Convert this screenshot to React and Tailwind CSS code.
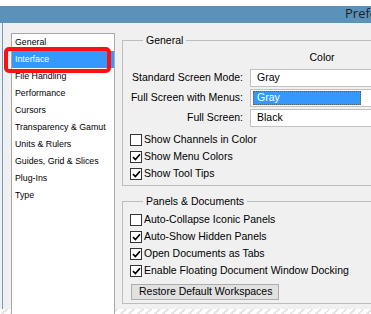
import React from "react";

const Chevron = () => (
  <svg width="7" height="5" viewBox="0 0 7 5" className="shrink-0">
    <path d="M0.5 0.8 L3.5 3.8 L6.5 0.8" stroke="#333" strokeWidth="1.2" fill="none" />
  </svg>
);

const Check = ({ checked, label }) => (
  <div className="flex items-center h-[17px]">
    <span className="w-[12px] h-[12px] border border-[#333333] bg-white flex items-center justify-center shrink-0">
      {checked && (
        <svg width="9" height="8" viewBox="0 0 9 8">
          <path d="M1 4.2 L3.4 6.6 L8 1.2" stroke="#000" strokeWidth="1.7" fill="none" />
        </svg>
      )}
    </span>
    <span className="ml-[2px] whitespace-nowrap">{label}</span>
  </div>
);

const Select = ({ value, focused }) => (
  <div className="h-[18px] w-[144px] border border-[#c2c2c2] bg-white flex items-center pr-[4px]">
    {focused ? (
      <div className="ml-[2px] h-[14px] w-[108px] bg-[#3399ff] border border-dotted border-[#7a5a30] text-white flex items-center pl-[3px]">
        {value}
      </div>
    ) : (
      <div className="pl-[6px] w-[111px]">{value}</div>
    )}
    <div className="flex-1" />
    <Chevron />
  </div>
);

const items = [
  "General",
  "Interface",
  "File Handling",
  "Performance",
  "Cursors",
  "Transparency & Gamut",
  "Units & Rulers",
  "Guides, Grid & Slices",
  "Plug-Ins",
  "Type",
];

export default function App() {
  return (
    <div
      className="w-[371px] h-[314px] overflow-hidden bg-white flex flex-col text-[10.5px] text-black"
      style={{ fontFamily: '"Liberation Sans", Arial, sans-serif' }}
    >
      <div className="h-[6px] shrink-0 bg-white" />
      <div
        className="h-[17px] shrink-0 bg-[#5b92bc] pl-[345px] whitespace-nowrap text-[13px] leading-[15px] text-[#1b1f24]"
        style={{ fontFamily: '"Open Sans", "Noto Sans", sans-serif' }}
      >
        Preferences
      </div>
      <div className="h-[286px] shrink-0 bg-[#f0f0f0] flex">
        <div className="ml-[2px] border-l border-[#6d9cc2] flex pt-[10px] pl-[8px]">
          <div className="relative w-[104px] h-[290px] shrink-0 border border-[#a9a9a9] bg-white text-[8.8px]">
            {items.map((it, i) => (
              <div
                key={it}
                className={
                  "h-[17px] flex items-center pl-[3px] whitespace-nowrap " +
                  (i === 1 ? "bg-[#3399ff] text-white" : "")
                }
              >
                {it}
              </div>
            ))}
            <div className="absolute left-[-8px] top-[13px] w-[107px] h-[26px] border-4 border-[#ff1010] rounded-[5px]" />
          </div>
          <div className="ml-[7px] w-[280px] shrink-0 flex flex-col">
            <fieldset className="border border-[#bdbdbd] pl-[7px] pb-[3px]">
              <legend className="ml-[13px] px-[3px] h-[14px] leading-[14px]">General</legend>
              <div className="grid grid-cols-[120px_144px] gap-x-[7px] gap-y-[2px] -ml-[7px] items-center">
                <div className="h-[14px] mt-[3px]" />
                <div className="h-[14px] mt-[3px] leading-[14px] text-center mb-[3px]">Color</div>
                <div className="text-right whitespace-nowrap">Standard Screen Mode:</div>
                <Select value="Gray" />
                <div className="text-right whitespace-nowrap">Full Screen with Menus:</div>
                <Select value="Gray" focused />
                <div className="text-right whitespace-nowrap">Full Screen:</div>
                <Select value="Black" />
              </div>
              <div className="mt-[4px]">
                <Check label="Show Channels in Color" />
                <Check checked label="Show Menu Colors" />
                <Check checked label="Show Tool Tips" />
              </div>
            </fieldset>
            <fieldset className="mt-[8px] border border-[#bdbdbd] pl-[7px] pb-[3px]">
              <legend className="ml-[13px] px-[3px] h-[14px] leading-[14px]">Panels &amp; Documents</legend>
              <div className="mt-[3px]">
                <Check label="Auto-Collapse Iconic Panels" />
                <Check checked label="Auto-Show Hidden Panels" />
                <Check checked label="Open Documents as Tabs" />
                <Check checked label="Enable Floating Document Window Docking" />
              </div>
              <div className="mt-[5px] ml-[1px] h-[16px] w-[148px] bg-[#e1e1e1] border border-[#adadad] flex items-center pl-[7px] whitespace-nowrap">
                Restore Default Workspaces
              </div>
            </fieldset>
          </div>
        </div>
      </div>
      <div className="h-[6px] shrink-0 bg-[repeating-linear-gradient(135deg,#ffffff_0px,#ffffff_4px,#e4e4e4_4px,#e4e4e4_6px)]" />
    </div>
  );
}
